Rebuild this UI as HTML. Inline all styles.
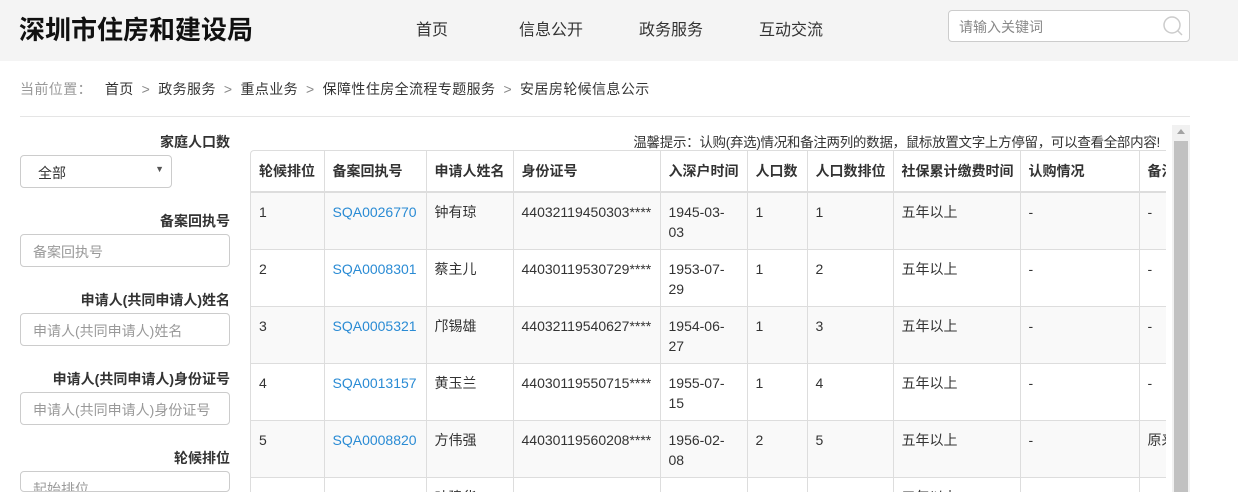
<!DOCTYPE html>
<html><head><meta charset="utf-8"><style>
*{margin:0;padding:0;box-sizing:border-box}
html,body{width:1238px;height:492px;overflow:hidden}
body{background:#fff;font-family:"Liberation Sans","Noto Sans CJK SC",sans-serif;color:#333;font-size:14px;position:relative}
.hd{position:absolute;left:0;top:0;width:1238px;height:61px;background:#f4f4f4}
.logo{position:absolute;left:19px;top:10px;font-size:26px;font-weight:bold;color:#111}
.nav{position:absolute;top:16px;font-size:16px;color:#333}
.search{position:absolute;left:948px;top:10px;width:242px;height:32px;border:1px solid #ccc;border-radius:4px;background:#fff;font-size:14px;color:#888;padding:6px 10px}
.crumb{position:absolute;left:20px;top:79px;font-size:14px;color:#333;letter-spacing:0.4px}
.crumb .g{color:#999}
.crumb .s{color:#888;margin:0 8px}
.hr{position:absolute;left:20px;top:116px;width:1170px;height:1px;background:#e5e5e5}
.lbl{position:absolute;right:1008px;font-size:14px;font-weight:bold;color:#333;white-space:nowrap}
.inp{position:absolute;left:20px;width:210px;height:33px;border:1px solid #ccc;border-radius:4px;padding:7px 12px;color:#999;font-size:14px;background:#fff;white-space:nowrap;overflow:hidden}
.tip{position:absolute;right:78px;top:131px;font-size:13.5px;letter-spacing:-0.3px;color:#333;white-space:nowrap}
.tw{position:absolute;left:250px;top:150px;width:916px;height:342px;overflow:hidden;border:1px solid #ddd;border-right:none;border-bottom:none;border-radius:4px 0 0 0}
table{border-collapse:collapse;table-layout:fixed;width:1000px}
th,td{border:1px solid #ddd;text-align:left;vertical-align:top;padding:0 8px;font-size:14px;line-height:20px;overflow:hidden;font-family:"Liberation Sans","Noto Sans CJK SC",sans-serif}
th{height:41px;font-weight:bold;vertical-align:middle;border-top:none;border-bottom:2px solid #ddd;white-space:nowrap}
td{height:57px;padding-top:9px}
tr.o td{background:#f9f9f9}
th:first-child,td:first-child{border-left:none}
a{color:#2a8bd4;text-decoration:none}
.sb{position:absolute;left:1172px;top:125px;width:18px;height:367px;background:#f1f1f1}
.th{position:absolute;left:1174px;top:141px;width:14px;height:351px;background:#c1c1c1}
</style></head><body>
<div class="hd">
<div class="logo">深圳市住房和建设局</div>
<div class="nav" style="left:416px">首页</div>
<div class="nav" style="left:519px">信息公开</div>
<div class="nav" style="left:639px">政务服务</div>
<div class="nav" style="left:759px">互动交流</div>
<div class="search">请输入关键词
<svg style="position:absolute;right:6px;top:5px" width="20" height="20" viewBox="0 0 20 20"><circle cx="9" cy="9" r="8" fill="none" stroke="#ccc" stroke-width="1.5"/><path d="M14.5 14.5L19 19" stroke="#ccc" stroke-width="1.5"/></svg></div>
</div>
<div class="crumb"><span class="g">当前位置：</span>&nbsp;&nbsp;&nbsp;首页<span class="s">&gt;</span>政务服务<span class="s">&gt;</span>重点业务<span class="s">&gt;</span>保障性住房全流程专题服务<span class="s">&gt;</span>安居房轮候信息公示</div>
<div class="hr"></div>
<div class="lbl" style="top:132px">家庭人口数</div>
<div class="inp" style="top:155px;width:152px;color:#333;padding-left:17px">全部<span style="position:absolute;right:7px;top:8px;font-size:9px;color:#555">▼</span></div>
<div class="lbl" style="top:211px">备案回执号</div>
<div class="inp" style="top:234px">备案回执号</div>
<div class="lbl" style="top:290px">申请人(共同申请人)姓名</div>
<div class="inp" style="top:313px">申请人(共同申请人)姓名</div>
<div class="lbl" style="top:369px">申请人(共同申请人)身份证号</div>
<div class="inp" style="top:392px">申请人(共同申请人)身份证号</div>
<div class="lbl" style="top:448px">轮候排位</div>
<div class="inp" style="top:471px;height:21px">起始排位</div>
<div class="tip">温馨提示：认购(弃选)情况和备注两列的数据，鼠标放置文字上方停留，可以查看全部内容!</div>
<div class="tw"><table>
<colgroup><col style="width:73px"><col style="width:102px"><col style="width:87px"><col style="width:147px"><col style="width:87px"><col style="width:60px"><col style="width:86px"><col style="width:127px"><col style="width:119px"><col style="width:112px"></colgroup>
<tr><th>轮候排位</th><th>备案回执号</th><th>申请人姓名</th><th>身份证号</th><th>入深户时间</th><th>人口数</th><th>人口数排位</th><th>社保累计缴费时间</th><th>认购情况</th><th>备注</th></tr>
<tr class="o"><td>1</td><td><a>SQA0026770</a></td><td>钟有琼</td><td>44032119450303****</td><td>1945-03-03</td><td>1</td><td>1</td><td>五年以上</td><td>-</td><td>-</td></tr>
<tr><td>2</td><td><a>SQA0008301</a></td><td>蔡主儿</td><td>44030119530729****</td><td>1953-07-29</td><td>1</td><td>2</td><td>五年以上</td><td>-</td><td>-</td></tr>
<tr class="o"><td>3</td><td><a>SQA0005321</a></td><td>邝锡雄</td><td>44032119540627****</td><td>1954-06-27</td><td>1</td><td>3</td><td>五年以上</td><td>-</td><td>-</td></tr>
<tr><td>4</td><td><a>SQA0013157</a></td><td>黄玉兰</td><td>44030119550715****</td><td>1955-07-15</td><td>1</td><td>4</td><td>五年以上</td><td>-</td><td>-</td></tr>
<tr class="o"><td>5</td><td><a>SQA0008820</a></td><td>方伟强</td><td>44030119560208****</td><td>1956-02-08</td><td>2</td><td>5</td><td>五年以上</td><td>-</td><td>原来</td></tr>
<tr><td>6</td><td><a>SQA0012513</a></td><td>叶建华</td><td>44030119581015****</td><td>1961-06-01</td><td>2</td><td>6</td><td>五年以上</td><td>-</td><td>-</td></tr>
</table></div>
<div class="sb"><div style="position:absolute;left:5px;top:4px;width:0;height:0;border-left:4px solid transparent;border-right:4px solid transparent;border-bottom:5px solid #a3a3a3"></div></div>
<div class="th"></div>
</body></html>
